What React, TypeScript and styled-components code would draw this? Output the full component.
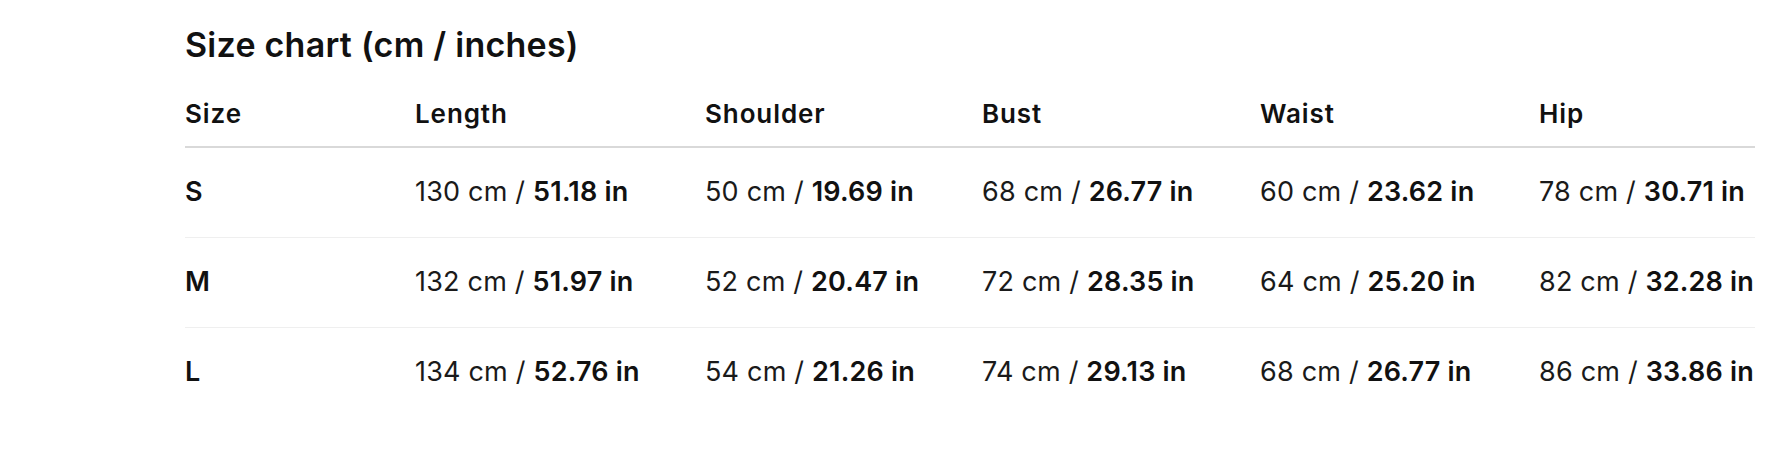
import React from "react";
import styled, { createGlobalStyle } from "styled-components";

const GlobalStyle = createGlobalStyle`
  html, body {
    margin: 0;
    padding: 0;
    background: #ffffff;
  }
  body {
    font-family: Inter, "Noto Sans", "Liberation Sans", sans-serif;
    color: #111111;
  }
`;

const Page = styled.div`
  width: 1792px;
  height: 470px;
  box-sizing: border-box;
  padding: 25px 0 0 185px;
  background: #ffffff;
  overflow: hidden;
`;

const Title = styled.h2`
  margin: 0 0 34px 0;
  font-size: 34px;
  line-height: 40px;
  font-weight: 600;
  letter-spacing: 0.25px;
  color: #111111;
`;

const Table = styled.div`
  width: 1570px;
  display: flex;
  flex-direction: column;
`;

const Row = styled.div<{ $head?: boolean; $last?: boolean }>`
  display: grid;
  grid-template-columns: 230px 290px 277px 278px 279px 216px;
  align-items: center;
  padding: ${(p) => (p.$head ? "0 0 17px 0" : "28px 0 29px 0")};
  border-bottom: ${(p) =>
    p.$head ? "2px solid #d9d9d9" : p.$last ? "1px solid transparent" : "1px solid #efefef"};
`;

const HeadCell = styled.div`
  font-size: 26px;
  line-height: 30px;
  font-weight: 600;
  letter-spacing: 0.9px;
  color: #111111;
  white-space: nowrap;
`;

const SizeCell = styled.div`
  font-size: 27px;
  line-height: 32px;
  font-weight: 600;
  color: #111111;
`;

const ValueCell = styled.div`
  font-size: 27px;
  line-height: 32px;
  font-weight: 400;
  letter-spacing: 0.2px;
  color: #1a1a1a;
  white-space: nowrap;
`;

const Inches = styled.strong`
  font-weight: 600;
  color: #111111;
`;

const headers = ["Size", "Length", "Shoulder", "Bust", "Waist", "Hip"];

const rows: { size: string; values: [number, string][] }[] = [
  {
    size: "S",
    values: [
      [130, "51.18"],
      [50, "19.69"],
      [68, "26.77"],
      [60, "23.62"],
      [78, "30.71"],
    ],
  },
  {
    size: "M",
    values: [
      [132, "51.97"],
      [52, "20.47"],
      [72, "28.35"],
      [64, "25.20"],
      [82, "32.28"],
    ],
  },
  {
    size: "L",
    values: [
      [134, "52.76"],
      [54, "21.26"],
      [74, "29.13"],
      [68, "26.77"],
      [86, "33.86"],
    ],
  },
];

export default function App() {
  return (
    <>
      <GlobalStyle />
      <Page>
        <Title>Size chart (cm / inches)</Title>
        <Table>
          <Row $head>
            {headers.map((h) => (
              <HeadCell key={h}>{h}</HeadCell>
            ))}
          </Row>
          {rows.map((r, i) => (
            <Row key={r.size} $last={i === rows.length - 1}>
              <SizeCell>{r.size}</SizeCell>
              {r.values.map(([cm, inch], j) => (
                <ValueCell key={j}>
                  {cm} cm / <Inches>{inch} in</Inches>
                </ValueCell>
              ))}
            </Row>
          ))}
        </Table>
      </Page>
    </>
  );
}
